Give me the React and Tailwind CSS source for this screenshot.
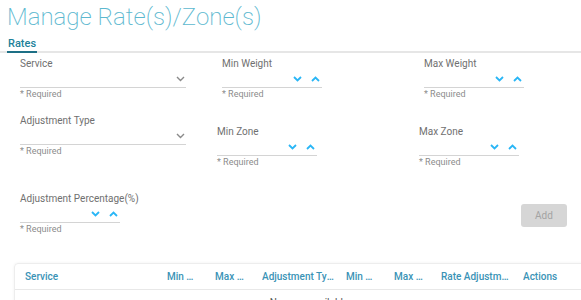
import React from "react"

const ChevronDown = ({ color = "#29b6f6", w = 1.8 }) => (
    <svg width="9" height="6" viewBox="0 0 9 6" fill="none">
        <path d="M1 1l3.5 3.5L8 1" stroke={color} strokeWidth={w} />
    </svg>
)

const ChevronUp = ({ color = "#29b6f6", w = 1.8 }) => (
    <svg width="9" height="6" viewBox="0 0 9 6" fill="none">
        <path d="M1 5l3.5-3.5L8 5" stroke={color} strokeWidth={w} />
    </svg>
)

function Field({ label, kind, className }) {
    return (
        <div className={className}>
            <div className="h-[14px] text-[10px] leading-[14px] text-[#707070] whitespace-nowrap">{label}</div>
            <div className="h-[17px] border-b border-[#d4d4d4] flex items-start justify-end pt-[5px]">
                {kind === "select" ? (
                    <div className="mr-[1px]"><ChevronDown color="#8a8a8a" w={1.4} /></div>
                ) : (
                    <div className="flex gap-[9px] mr-[2px]">
                        <ChevronDown />
                        <ChevronUp />
                    </div>
                )}
            </div>
            <div className="h-[12px] text-[9px] leading-[12px] text-[#8c8c8c]">* Required</div>
        </div>
    )
}

const columns = [
    { name: "Service", w: "w-[142px]", t: "" },
    { name: "Min Weight", w: "w-[48px]", t: "max-w-[30px]" },
    { name: "Max Weight", w: "w-[47px]", t: "max-w-[30px]" },
    { name: "Adjustment Type", w: "w-[84px]", t: "max-w-[75px]" },
    { name: "Min Zone", w: "w-[48px]", t: "max-w-[30px]" },
    { name: "Max Zone", w: "w-[47px]", t: "max-w-[30px]" },
    { name: "Rate Adjustment", w: "w-[82px]", t: "max-w-[72px]" },
    { name: "Actions", w: "w-[60px]", t: "" },
]

export default function App() {
    return (
        <div className="w-[581px] h-[300px] overflow-hidden bg-white font-['Roboto',sans-serif]">
            <h1 className="pl-[7px] pt-[1px] h-[36px] text-[24px] leading-[32px] font-extralight text-[#5cb8cf] whitespace-nowrap">
                Manage Rate(s)/Zone(s)
            </h1>
            <div className="flex border-b-2 border-[#e6e6e6]">
                <div className="ml-[7px] -mb-[2px] border-b-2 border-[#1d6f85] pt-[1px] pb-[1px] px-[1px] text-[11px] leading-[13px] font-medium text-[#21819a]">
                    Rates
                </div>
            </div>

            <div className="pl-[20px] pr-[14px] pt-[4px]">
                <div className="flex">
                    <Field label="Service" kind="select" className="w-[166px]" />
                    <Field label="Min Weight" className="ml-[36px] w-[100px]" />
                    <Field label="Max Weight" className="ml-[102px] w-[100px]" />
                </div>
                <div className="flex items-start mt-[14px]">
                    <Field label="Adjustment Type" kind="select" className="w-[166px]" />
                    <Field label="Min Zone" className="ml-[31px] mt-[11px] w-[100px]" />
                    <Field label="Max Zone" className="ml-[102px] mt-[11px] w-[100px]" />
                </div>
                <div className="flex items-start mt-[24px]">
                    <Field label="Adjustment Percentage(%)" className="w-[100px]" />
                    <button className="ml-auto mt-[12px] w-[46px] h-[23px] rounded-[3px] bg-[#d6d6d6] text-[10px] text-[#a3a3a3]">
                        Add
                    </button>
                </div>
            </div>

            <div className="ml-[14px] mt-[28px] w-[590px] rounded-[4px] border border-[#ededed] shadow-[0_0_3px_rgba(0,0,0,0.06)]">
                <div className="h-[26px] flex items-center pl-[10px] border-b border-[#e8e8e8] text-[10px] font-medium text-[#3a93b6]">
                    {columns.map((c) => (
                        <div key={c.name + c.w} className={c.w + " shrink-0"}>
                            <div className={c.t + " truncate"}>{c.name}</div>
                        </div>
                    ))}
                </div>
                <div className="pt-[6px] h-[40px] text-center text-[10px] leading-[14px] text-[#555]">
                    No rows available
                </div>
            </div>
        </div>
    )
}
